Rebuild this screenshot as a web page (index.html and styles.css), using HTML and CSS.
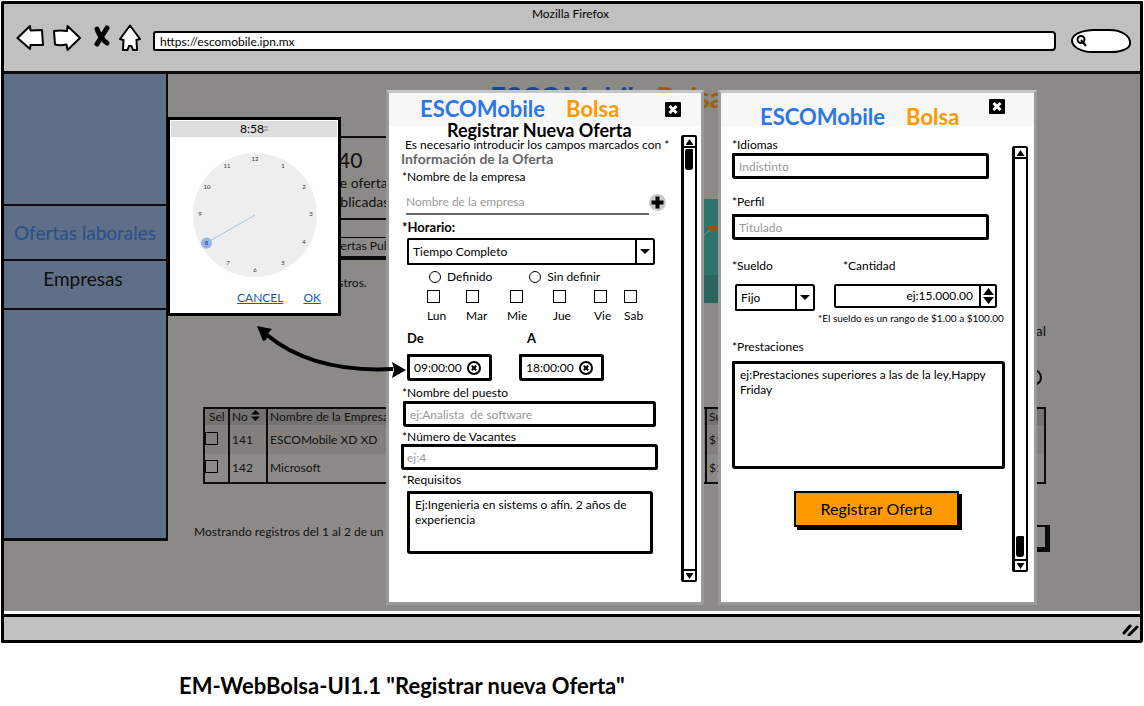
FILE: index.html
```html
<!DOCTYPE html>
<html lang="es">
<head>
<meta charset="utf-8">
<title>EM-WebBolsa-UI1.1</title>
<link rel="stylesheet" href="styles.css">
</head>
<body>
<div class="window">
  <header class="chrome">
    <div class="chrome-title">Mozilla Firefox</div>
    <div class="toolbar">
      <button class="nav-btn" aria-label="Atrás"><svg width="28" height="28" viewBox="0 0 28 28"><path d="M1.500 14 14 2 14.500 6.500 26 6 27 21 14.500 21 14 25Z"/></svg></button>
      <button class="nav-btn forward" aria-label="Adelante"><svg width="28" height="28" viewBox="0 0 28 28"><path d="M1 7Q7 6 14 7L14.500 2 27 14 14.500 26 13.500 20.500Q7 22 2 20.500Z"/></svg></button>
      <button class="nav-btn stop" aria-label="Detener"><svg width="18" height="28" viewBox="0 0 18 28"><path class="cross" d="M4 5Q7 14 14 19M14 4Q9 12 4 20"/></svg></button>
      <button class="nav-btn home" aria-label="Inicio"><svg width="24" height="28" viewBox="0 0 24 28"><path d="M12 1.500 22 15 18.500 16 19 26H15L13.500 22H11L9.500 26H5L5.500 16 2 15Z"/></svg></button>
      <input class="url" type="text" aria-label="Dirección" value="https://escomobile.ipn.mx">
      <label class="finder"><svg width="14" height="14" viewBox="0 0 14 14"><circle cx="6" cy="5.500" r="3.500"/><path d="M6 6 11 12"/></svg><input type="text" aria-label="Buscar"></label>
    </div>
  </header>

  <div class="page">
    <nav class="sidebar">
      <a class="item current" href="#ofertas">Ofertas laborales</a>
      <a class="item" href="#empresas">Empresas</a>
    </nav>
    <main class="content">
      <h1 class="brand brand-page"><span class="esco">ESCOMobile</span><span class="bolsa">Bolsa</span></h1>
      <div class="summary">
        <section class="card">
          <p class="count">40</p>
          <p class="about"># de ofertas<br>publicadas</p>
          <p class="card-link">Ofertas Publicadas</p>
        </section>
        <svg class="chart" viewBox="0 0 200 104" preserveAspectRatio="none"><path fill="#2e746b" d="M0 0H200V104H0Z"/><path fill="#29665e" d="M0 76H200V104H0Z"/><path fill="none" stroke="#7c9692" d="M59 37Q64 31 69 30"/><ellipse cx="69" cy="29" rx="6" ry="3" fill="#955411"/></svg>
      </div>
      <p class="length">Mostrar 10 registros.</p>
      <p class="total">Total</p>
      <div class="pill-row"><span class="pill"></span></div>
      <table class="offers">
        <colgroup><col class="c-sel"><col class="c-no"><col class="c-name"><col></colgroup>
        <tr><th>Sel</th><th>No <svg width="9" height="11" viewBox="0 0 9 11"><path d="M4.500 0 9 4.500H0ZM0 6.500H9L4.500 11Z"/></svg></th><th>Nombre de la Empresa</th><th>Sueldo</th></tr>
        <tr class="odd"><td><input class="box" type="checkbox" aria-label="Seleccionar 141"></td><td>141</td><td>ESCOMobile XD XD</td><td>$1.00</td></tr>
        <tr><td><input class="box" type="checkbox" aria-label="Seleccionar 142"></td><td>142</td><td>Microsoft</td><td>$1.00</td></tr>
      </table>
      <div class="pager"><span>Mostrando registros del 1 al 2 de un total de 2</span><button class="next" aria-label="Siguiente"></button></div>
    </main>
  </div>
  <footer class="status"><svg width="18" height="14" viewBox="0 0 18 14"><path d="M2 11 8 4M7 13 15 5"/></svg></footer>

  <section class="dialog offer">
    <header class="dialog-head">
      <div class="brand"><span class="esco">ESCOMobile</span><span class="bolsa">Bolsa</span></div>
      <button class="close" aria-label="Cerrar"><svg width="16" height="15" viewBox="0 0 16 15"><path d="M4.500 4 11.500 11M11.500 4 4.500 11"/></svg></button>
    </header>
    <div class="dialog-body">
      <form class="form">
        <h2>Registrar Nueva Oferta</h2>
        <p class="hint">Es necesario introducir los campos marcados con *</p>
        <h3>Información de la Oferta</h3>
        <label class="lbl" for="empresa">*Nombre de la empresa</label>
        <div class="company"><input id="empresa" type="text" placeholder="Nombre de la empresa"><button type="button" class="add" aria-label="Agregar"><svg width="17" height="17" viewBox="0 0 17 17"><circle cx="8.500" cy="8.500" r="8.500"/><path d="M8.500 2.500V14.500M2.500 8.500H14.500"/></svg></button></div>
        <label class="lbl strong" for="horario">*Horario:</label>
        <div class="pick wide"><select id="horario"><option>Tiempo Completo</option></select></div>
        <div class="radios">
          <label><input type="radio" name="def">Definido</label>
          <label><input type="radio" name="def">Sin definir</label>
        </div>
        <div class="days">
          <label><input class="box" type="checkbox">Lun</label>
          <label><input class="box" type="checkbox">Mar</label>
          <label class="mid"><input class="box" type="checkbox">Mie</label>
          <label><input class="box" type="checkbox">Jue</label>
          <label><input class="box" type="checkbox">Vie</label>
          <label><input class="box" type="checkbox">Sab</label>
        </div>
        <div class="times">
          <label class="strong" for="de">De</label>
          <label class="strong to" for="a">A</label>
          <div class="time"><input id="de" type="text" value="09:00:00"><button type="button" aria-label="Borrar"><svg width="14" height="14" viewBox="0 0 14 14"><circle cx="7" cy="7" r="6"/><path d="M4.800 4.800 9.200 9.200M9.200 4.800 4.800 9.200"/></svg></button></div>
          <div class="time"><input id="a" type="text" value="18:00:00"><button type="button" aria-label="Borrar"><svg width="14" height="14" viewBox="0 0 14 14"><circle cx="7" cy="7" r="6"/><path d="M4.800 4.800 9.200 9.200M9.200 4.800 4.800 9.200"/></svg></button></div>
        </div>
        <label class="lbl puesto" for="puesto">*Nombre del puesto</label>
        <input class="field" id="puesto" type="text" placeholder="ej:Analista  de software">
        <label class="lbl" for="vacantes">*Número de Vacantes</label>
        <input class="field" id="vacantes" type="text" placeholder="ej:4">
        <label class="lbl" for="requisitos">*Requisitos</label>
        <textarea class="area" id="requisitos">Ej:Ingenieria en sistems o afín. 2 años de experiencia</textarea>
      </form>
      <div class="scroll"><i class="arrow up"></i><i class="thumb"></i><i class="arrow down"></i></div>
    </div>
  </section>

  <section class="dialog benefits">
    <header class="dialog-head">
      <div class="brand"><span class="esco">ESCOMobile</span><span class="bolsa">Bolsa</span></div>
      <button class="close" aria-label="Cerrar"><svg width="16" height="15" viewBox="0 0 16 15"><path d="M4.500 4 11.500 11M11.500 4 4.500 11"/></svg></button>
    </header>
    <div class="dialog-body">
      <form class="form">
        <label class="lbl" for="idiomas">*Idiomas</label>
        <input class="field" id="idiomas" type="text" placeholder="Indistinto">
        <label class="lbl perfil" for="perfil">*Perfil</label>
        <input class="field" id="perfil" type="text" placeholder="Titulado">
        <div class="pay">
          <label for="sueldo">*Sueldo</label>
          <label class="amount-label" for="cantidad">*Cantidad</label>
          <div class="pick"><select id="sueldo"><option>Fijo</option></select></div>
          <div class="spin"><input id="cantidad" type="text" value="ej:15.000.00"><button type="button" aria-label="Cambiar cantidad"><svg width="11" height="16" viewBox="0 0 11 16"><path d="M5.500 0 11 7H0ZM0 9H11L5.500 16Z"/></svg></button></div>
        </div>
        <p class="range">*El sueldo es un rango de $1.00 a $100.00</p>
        <label class="lbl" for="prestaciones">*Prestaciones</label>
        <textarea class="area" id="prestaciones">ej:Prestaciones superiores a las de la ley,Happy Friday</textarea>
        <button type="button" class="submit">Registrar Oferta</button>
      </form>
      <div class="scroll end"><i class="arrow up"></i><i class="thumb"></i><i class="arrow down"></i></div>
    </div>
  </section>

  <section class="clock">
    <div class="clock-head">8:58<small>am<br>pm</small></div>
    <svg class="face" width="124" height="124" viewBox="0 0 124 124">
      <circle class="disc" cx="62" cy="62" r="62"/>
      <circle class="pick-dot" cx="13.500" cy="90" r="5.500"/><path class="hand" d="M62 62 13.500 90"/>
      <g><text x="62" y="8">12</text><text x="90" y="15">1</text><text x="111" y="36">2</text><text x="118" y="63">3</text><text x="111" y="91">4</text><text x="90" y="112">5</text><text x="62" y="119">6</text><text x="35" y="112">7</text><text x="13.500" y="92">8</text><text x="7" y="63">9</text><text x="14" y="36">10</text><text x="34" y="15">11</text></g>
    </svg>
    <div class="clock-actions"><a href="#cancel">CANCEL</a><a href="#ok">OK</a></div>
  </section>
  <svg class="link-arrow" width="152" height="56" viewBox="0 0 152 56"><path class="line" d="M12 11Q58 49 138 45"/><path d="M2 2 17 5 14 8 11 16 8 17ZM151 46 137 38 139 46 137 54Z"/></svg>
</div>
<h2 class="caption">EM-WebBolsa-UI1.1 "Registrar nueva Oferta"</h2>
</body>
</html>
```
FILE: styles.css
```css
* { box-sizing: border-box; }
body { margin: 0; background: #fff; color: #000; font: 12px/14px Lato, "Noto Sans", sans-serif; }
h1, h2, h3, p { margin: 0; }
button, input, select, textarea { font: inherit; color: inherit; margin: 0; padding: 0; border: 0; background: none; border-radius: 0; outline: 0; }
input, select, textarea { min-width: 0; }
svg { display: block; }
::placeholder { color: #999; opacity: 1; }

.window { position: relative; margin: 1px 1px 0; border: 3px solid #000; background: #fff; border-radius: 2px 1px 3px 1px; }
.chrome { height: 67px; padding: 3px 9px 0 12px; background: #c0c0c0; }
.chrome-title { padding-right: 6px; text-align: center; }
.toolbar { display: flex; align-items: center; height: 33px; }
.nav-btn path { fill: #fff; stroke: #000; stroke-width: 2; stroke-linejoin: round; }
.nav-btn path.cross { fill: none; stroke-width: 5; stroke-linecap: round; }
.forward { margin-left: 9px; }
.stop { margin-left: 12px; }
.home { margin-left: 7px; }
.url { flex: 1; height: 20px; margin: 7px 15px 0 11px; padding: 0 5px; background: #fff; border: 2px solid #000; border-radius: 3px 4px 4px 2px; }
.finder { display: flex; align-items: center; width: 60px; height: 24px; margin-top: 7px; padding-left: 2px; background: #fff; border: 2px solid #000; border-radius: 24px 22px 20px 22px / 12px 14px 10px 13px; }
.finder input { width: 36px; }
.finder svg { fill: none; stroke: #000; stroke-width: 2; }

.page { display: flex; align-items: flex-start; height: 540px; border-top: 3px solid #0c0c0c; background: #8c8a87; }
.sidebar { width: 164px; height: 467px; padding-top: 130px; background: #5e6f87; border-right: 2px solid #0c0c0c; border-bottom: 3px solid #0c0c0c; }
.item { display: block; border-top: 2px solid #0c0c0c; font-size: 19px; line-height: 53px; text-align: center; color: #0f0f0f; text-decoration: none; }
.item.current { color: #28508c; }
.item + .item { height: 51px; padding-right: 4px; border-bottom: 2px solid #0c0c0c; line-height: 36px; }
.content { flex: 1; padding: 7px 94px 0 26px; color: #111; }
.brand { display: flex; font-size: 22px; line-height: 30px; font-weight: 700; gap: 21px; }
.esco { color: #2b78e4; }
.bolsa { color: #ff9900; }
.brand-page { margin-left: 296px; font-size: 28px; line-height: 32px; gap: 7px; }
.brand-page .esco { color: #1c4a88; }
.brand-page .bolsa { color: #9a5f08; }
.summary { display: flex; align-items: flex-end; gap: 150px; height: 190px; }
.card { width: 191px; height: 124px; margin: 0 0 43px 109px; border: 2px solid #0c0c0c; border-bottom-width: 4px; }
.card .count { margin-top: 9px; padding-left: 33px; font-size: 21px; line-height: 26px; }
.card .about { width: 96px; padding-left: 8px; font-size: 14px; line-height: 19px; text-align: center; white-space: nowrap; }
.card-link { margin-top: 7px; padding: 17px 0 0 22px; border-top: 2px solid #0c0c0c; line-height: 18px; background: linear-gradient(#0c0c0c, #0c0c0c) 0 17px / 100% 1px no-repeat; }
.chart { width: 200px; height: 104px; }
.length { margin: -27px 0 0 63px; }
.total { margin-top: 34px; text-align: right; font-size: 14px; }
.pill-row { display: flex; justify-content: flex-end; margin-top: 31px; }
.pill { width: 60px; height: 17px; margin-right: 4px; border: 2px solid #0c0c0c; border-radius: 9px; }
.offers { width: calc(100% - 9px); margin: 21px 0 0 9px; table-layout: fixed; border-collapse: collapse; border: 2px solid #0c0c0c; }
.c-sel { width: 25px; }
.c-no { width: 38px; }
.c-name { width: 439px; }
.offers th, .offers td { height: 29px; padding: 0 2px; border-left: 2px solid #0c0c0c; text-align: left; font-weight: 400; }
.offers th { height: 17px; background: #757371; }
.offers th:first-child { padding-left: 4px; }
.offers th svg { display: inline; }
.offers .odd td { background: #827f7d; }
.offers td:first-child { padding: 0; }
.pager { display: flex; justify-content: space-between; margin-top: 41px; margin-right: -4px; }
.next { width: 60px; height: 27px; border: solid #0c0c0c; border-width: 2px 5px 5px 2px; }
.box { appearance: none; width: 13px; height: 13px; border: 1px solid #000; }
.status { display: flex; justify-content: flex-end; align-items: center; height: 26px; margin-top: 3px; border-top: 3px solid #000; background: #c0c0c0; }
.status path { fill: none; stroke: #000; stroke-width: 3; stroke-linecap: round; }

.dialog { position: absolute; top: 86px; height: 515px; background: #fff; border: 3px solid #9a9a9a; border-top-color: #c5c5c5; }
.dialog.offer { left: 382px; width: 318px; }
.dialog.benefits { left: 714px; width: 319px; }
.dialog-head { position: relative; display: flex; height: 33px; padding: 1px 0 0 31px; background: #f7f7f7; }
.benefits .dialog-head { padding: 9px 0 0 39px; }
.close { position: absolute; right: 20px; top: 9px; background: #000; border-radius: 1px; }
.benefits .close { right: 29px; top: 6px; }
.close path { stroke: #fff; stroke-width: 3; }
.dialog-body { position: relative; display: flex; justify-content: space-between; }
.form { display: flex; flex-direction: column; width: 278px; padding-left: 12px; }
.form h2 { margin: -4px 0 0 46px; font-size: 18px; line-height: 17px; white-space: nowrap; }
.hint { margin-left: 4px; line-height: 12px; white-space: nowrap; }
.form h3 { font-size: 14px; line-height: 16px; color: #666; }
.lbl { margin: 3px 0 0 1px; }
.strong { font-size: 13px; font-weight: 700; }
.company { display: flex; align-items: center; margin: 6px 0 2px 5px; }
.company input { width: 243px; height: 25px; border-bottom: 2px solid #666; }
.add circle { fill: #c8c8c8; }
.add path { stroke: #000; stroke-width: 4; }
.pick { position: relative; width: 80px; height: 27px; border: 2px solid #000; border-radius: 2px 3px 2px 1px; }
.pick select { appearance: none; width: 100%; height: 100%; padding-left: 4px; }
.pick::before { content: ""; position: absolute; right: 16px; top: 0; bottom: 0; border-left: 2px solid #000; }
.pick::after { content: ""; position: absolute; right: 3px; top: 9px; border: 5px solid transparent; border-top-color: #000; border-bottom: 0; }
.pick.wide { width: 248px; margin: 4px 0 0 6px; }
.radios { display: flex; gap: 37px; margin: 5px 0 0 28px; }
.radios label { display: flex; align-items: center; gap: 6px; }
.radios input { appearance: none; width: 12px; height: 12px; border: 1px solid #000; border-radius: 50%; }
.days { display: grid; grid-template-columns: 39px 41px 46px 41px 30px 30px; margin: 6px 0 0 26px; }
.days label { display: flex; flex-direction: column; gap: 6px; }
.days .mid .box { margin-left: 3px; }
.times { display: grid; grid-template-columns: 85px 85px; gap: 9px 27px; margin: 8px 0 0 6px; }
.times .to { padding-left: 8px; }
.time { display: flex; align-items: center; height: 27px; padding-left: 4px; border: 3px solid #000; border-radius: 1px 3px 2px 3px; }
.time input { width: 53px; }
.time svg { fill: none; stroke: #000; stroke-width: 2; }
.puesto { margin-top: 5px; }
.field { width: 253px; height: 26px; margin: 1px 0 0 2px; padding-left: 4px; border: 3px solid #000; border-radius: 1px 3px 2px 3px; }
#vacantes { width: 257px; margin: 0; padding-left: 3px; }
.area { display: block; resize: none; overflow: hidden; line-height: 15px; padding: 3px 5px; border: 3px solid #000; border-radius: 1px 3px 2px 3px; }
#requisitos { width: 246px; height: 63px; margin: 4px 0 0 6px; }

.scroll { display: flex; flex-direction: column; width: 16px; height: 447px; margin: 9px 4px 0 0; border: 2px solid #000; border-left-width: 3px; border-radius: 2px; background: #fff; }
.arrow { display: flex; justify-content: center; height: 11px; padding-top: 2px; }
.up { border-bottom: 2px solid #000; }
.down { border-top: 2px solid #000; margin-top: auto; }
.arrow::before { content: ""; width: 8px; height: 6px; background: #000; clip-path: polygon(50% 0, 100% 100%, 0 100%); }
.down::before { clip-path: polygon(0 0, 100% 0, 50% 100%); }
.thumb { width: 8px; height: 21px; margin: 1px 0 0 1px; border-radius: 2px 1px 3px 3px; background: #000; }
.end { height: 426px; margin: 20px 6px 0 0; }
.end .thumb { margin: auto 0 2px 1px; }
.end .down { margin-top: 0; }

.benefits .form { width: 290px; padding: 9px 0 0 11px; }
.benefits .lbl { margin-left: 0; }
.benefits .field { width: 257px; margin: 1px 0 0 0; }
.benefits .perfil { margin-top: 16px; }
.benefits #perfil { margin-top: 5px; }
.pay { display: grid; grid-template-columns: 80px 163px; gap: 11px 19px; margin: 19px 0 0 3px; }
.pay label:first-child { margin-left: -3px; }
.amount-label { padding-left: 9px; }
.spin { display: flex; height: 24px; border: 2px solid #000; border-radius: 2px; }
.spin input { flex: 1; padding-right: 6px; text-align: right; }
.spin button { padding: 0 1px 0 2px; border-left: 2px solid #000; }
.range { margin: 1px 0 0 86px; font-size: 10px; line-height: 12px; white-space: nowrap; }
.benefits .range + .lbl { margin-top: 16px; }
#prestaciones { width: 273px; height: 108px; margin-top: 7px; }
.submit { align-self: flex-start; width: 165px; height: 36px; margin: 22px 0 0 62px; background: #ff9900; border: 2px solid #000; box-shadow: 3px 3px #000; font-size: 16px; }

.clock { position: absolute; left: 163px; top: 113px; width: 174px; border: 3px solid #000; padding: 1px 1px 8px; background: #fff; }
.clock-head { display: flex; justify-content: center; align-items: center; height: 16px; background: #ddd; }
.clock-head small { font-size: 3px; line-height: 3px; color: #666; }
.face { margin: 16px auto 14px 22px; }
.disc { fill: #eee; }
.pick-dot { fill: #8fb8f2; }
.hand { stroke: #a0c3f5; stroke-width: 1; }
.face text { font-size: 6px; text-anchor: middle; fill: #333; }
.clock-actions { display: flex; justify-content: flex-end; gap: 20px; padding-right: 16px; }
.clock-actions a { color: #1460a4; }
.link-arrow { position: absolute; left: 251px; top: 320px; }
.link-arrow .line { fill: none; stroke: #000; stroke-width: 4; }
.caption { margin: 30px 0 0 179px; font-size: 22px; line-height: 26px; }
```
